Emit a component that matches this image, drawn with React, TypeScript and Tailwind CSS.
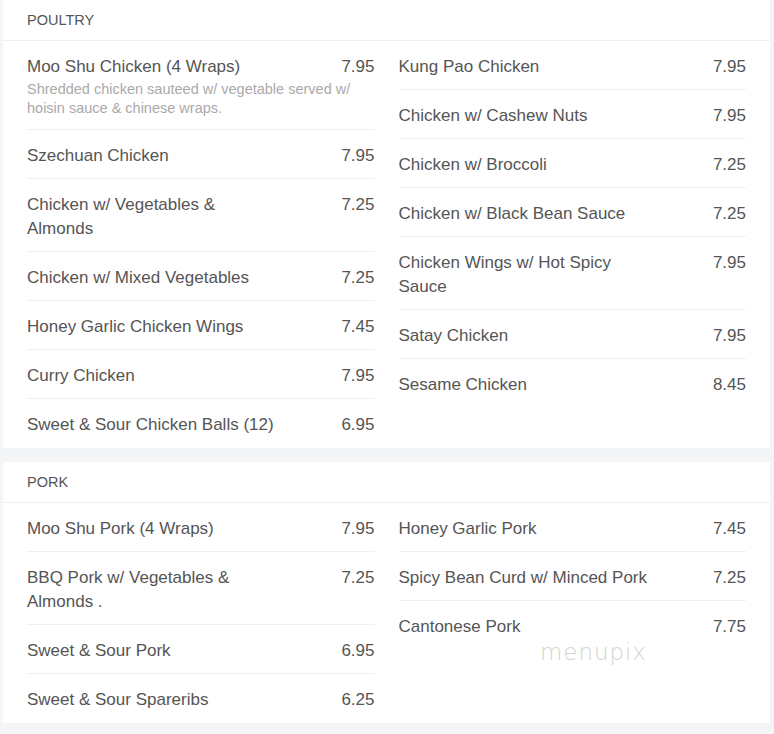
type Item = { name: string; price: string; desc?: string };

const poultryLeft: Item[] = [
  {
    name: 'Moo Shu Chicken (4 Wraps)',
    price: '7.95',
    desc: 'Shredded chicken sauteed w/ vegetable served w/ hoisin sauce & chinese wraps.',
  },
  { name: 'Szechuan Chicken', price: '7.95' },
  { name: 'Chicken w/ Vegetables & Almonds', price: '7.25' },
  { name: 'Chicken w/ Mixed Vegetables', price: '7.25' },
  { name: 'Honey Garlic Chicken Wings', price: '7.45' },
  { name: 'Curry Chicken', price: '7.95' },
  { name: 'Sweet & Sour Chicken Balls (12)', price: '6.95' },
];

const poultryRight: Item[] = [
  { name: 'Kung Pao Chicken', price: '7.95' },
  { name: 'Chicken w/ Cashew Nuts', price: '7.95' },
  { name: 'Chicken w/ Broccoli', price: '7.25' },
  { name: 'Chicken w/ Black Bean Sauce', price: '7.25' },
  { name: 'Chicken Wings w/ Hot Spicy Sauce', price: '7.95' },
  { name: 'Satay Chicken', price: '7.95' },
  { name: 'Sesame Chicken', price: '8.45' },
];

const porkLeft: Item[] = [
  { name: 'Moo Shu Pork (4 Wraps)', price: '7.95' },
  { name: 'BBQ Pork w/ Vegetables & Almonds .', price: '7.25' },
  { name: 'Sweet & Sour Pork', price: '6.95' },
  { name: 'Sweet & Sour Spareribs', price: '6.25' },
];

const porkRight: Item[] = [
  { name: 'Honey Garlic Pork', price: '7.45' },
  { name: 'Spicy Bean Curd w/ Minced Pork', price: '7.25' },
  { name: 'Cantonese Pork', price: '7.75' },
];

const MenuRow = ({ item }: { item: Item }) => (
  <div className="pt-[14px] pb-[10px] border-b border-[#f0f0f2] last:border-b-0">
    <div className="flex justify-between items-start text-[17px] leading-6 text-[#555]">
      <span className="max-w-[253px]">{item.name}</span>
      <span>{item.price}</span>
    </div>
    {item.desc && <p className="mt-[1px] mb-[1px] text-[14.5px] leading-[19px] text-[#aaa]">{item.desc}</p>}
  </div>
);

const Column = ({ items }: { items: Item[] }) => (
  <div className="flex flex-col">
    {items.map((item) => (
      <MenuRow key={item.name} item={item} />
    ))}
  </div>
);

const Section = ({
  title,
  left,
  right,
  children,
}: {
  title: string;
  left: Item[];
  right: Item[];
  children?: React.ReactNode;
}) => (
  <section className="relative bg-white">
    <div className="h-[41px] pt-[2px] flex items-center px-6 border-b border-[#f0f0f2] text-[14.5px] text-[#555]">
      {title}
    </div>
    <div className="grid grid-cols-2 gap-6 px-6 pb-[1px]">
      <Column items={left} />
      <Column items={right} />
    </div>
    {children}
  </section>
);

export default function App() {
  return (
    <div
      className="min-h-screen bg-[#f4f5f7] pl-[3px] pr-[4px] flex flex-col gap-[14px]"
      style={{ fontFamily: '"Liberation Sans", Arial, sans-serif' }}
    >
      <Section title="POULTRY" left={poultryLeft} right={poultryRight} />
      <Section title="PORK" left={porkLeft} right={porkRight}>
        <span
          className="absolute left-[537px] top-[173px] text-[23px] font-extralight tracking-[0.04em] text-[#d4d4d4] select-none"
          style={{ fontFamily: '"DejaVu Sans", sans-serif' }}
        >
          menupix
        </span>
      </Section>
    </div>
  );
}
